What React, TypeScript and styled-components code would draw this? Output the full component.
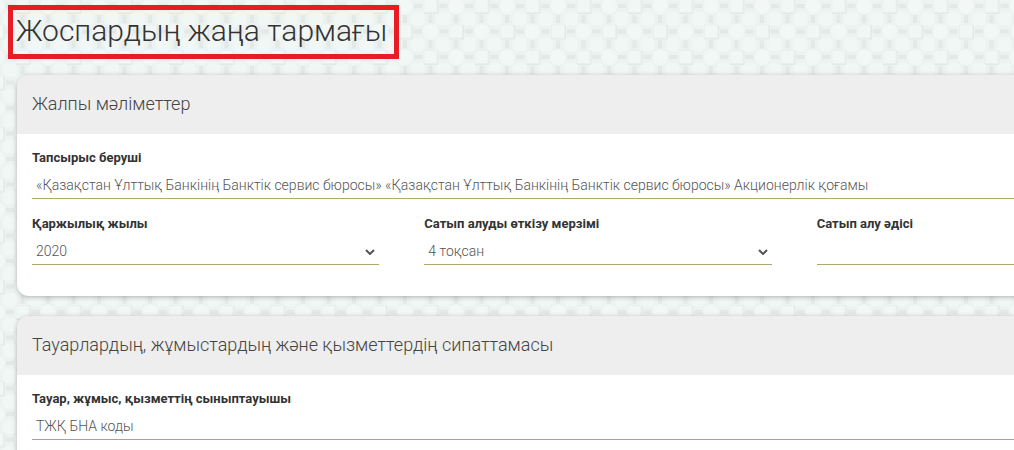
import React, { useId } from "react";
import styled, { createGlobalStyle } from "styled-components";

const GlobalStyle = createGlobalStyle`
  *, *::before, *::after { box-sizing: border-box; }
  html, body { margin: 0; padding: 0; }
  body {
    background: #eff5f3;
    color: #333;
    font-family: Roboto, "Liberation Sans", sans-serif;
    font-size: 14px;
  }
`;

const Page = styled.div`
  position: relative;
  min-height: 100vh;
  overflow: hidden;
`;

const Ornament = styled.svg`
  position: absolute;
  inset: 0;
  width: 100%;
  height: 100%;
`;

const Content = styled.main`
  position: relative;
  display: flex;
  flex-direction: column;
  gap: 16px;
  min-width: 1195px;
  padding: 5px 16px 0 8px;
`;

const PageTitle = styled.h1`
  align-self: flex-start;
  margin: 0;
  padding: 0 7px 2px 3px;
  border: 5px solid #e81c24;
  font-size: 30px;
  font-weight: 300;
  line-height: 42px;
`;

const Cards = styled.div`
  display: flex;
  flex-direction: column;
  gap: 20px;
  padding-left: 9px;
`;

const Card = styled.section`
  overflow: hidden;
  border-radius: 12px;
  background: #fff;
  box-shadow: 0 1px 5px rgba(0, 0, 0, 0.28);
`;

const CardHeader = styled.h2`
  margin: 0;
  padding: 0 15px 2px;
  background: #eee;
  color: #444;
  font-size: 18px;
  font-weight: 300;
  line-height: 57px;
`;

const CardBody = styled.div`
  display: flex;
  flex-direction: column;
  gap: 15px;
  padding: 14px 15px 31px;
`;

const Columns = styled.div`
  display: grid;
  grid-template-columns: repeat(3, 1fr);
  gap: 45px;
`;

const Field = styled.div`
  display: flex;
  flex-direction: column;
`;

const Label = styled.label`
  font-size: 13px;
  font-weight: 700;
  line-height: 20px;
`;

const controlStyles = `
  width: 100%;
  height: 31px;
  margin: 0;
  padding: 0 4px;
  border: 0;
  border-bottom: 1px solid #b0a66f;
  border-radius: 0;
  outline: 0;
  background: transparent;
  color: #555;
  font-family: inherit;
  font-size: 14px;
  font-weight: 300;
`;

const TextInput = styled.input`
  ${controlStyles}
  padding-top: 3px;
  &::placeholder { color: #555; opacity: 1; }
`;

const SelectBox = styled.div`
  display: grid;
  align-items: center;
  & > * { grid-area: 1 / 1; }
`;

const Select = styled.select`
  ${controlStyles}
  padding-top: 3px;
  appearance: none;
`;

const Chevron = styled.svg`
  justify-self: end;
  width: 10px;
  height: 6px;
  margin: 5px 4px 0 0;
  pointer-events: none;
`;

function BackgroundOrnament() {
  return (
    <Ornament aria-hidden="true">
      <defs>
        <g id="node-square">
          <rect x="-7" y="-7" width="14" height="14" fill="#e9efed" />
          <rect x="-6" y="-6" width="12" height="12" fill="#f2f7f6" />
          <path d="M-6.5 7.5H7.5V-6.5" fill="none" stroke="#e2e9e7" />
        </g>
        <g id="node-star">
          <path
            d="M-7 -7L-3 -5L0 -8L3 -5L7 -7L5 -3L8 0L5 3L7 7L3 5L0 8L-3 5L-7 7L-5 3L-8 0L-5 -3Z"
            fill="#f3f8f7"
          />
          <path d="M-8 -5L-5 -8M5 -8L8 -5M8 5L5 8M-5 8L-8 5" stroke="#e8eeec" />
        </g>
        <g id="link">
          <rect x="-5" y="-5" width="10" height="10" fill="#edf2f1" />
          <rect x="-4" y="-2" width="8" height="4" fill="#e2e9e7" />
        </g>
        <rect id="block" x="-6" y="-6" width="12" height="12" fill="#f1f7f5" />
        <pattern id="weave" x="-3" y="6" width="51" height="51" patternUnits="userSpaceOnUse">
          {[0, 1, 2].map((row) =>
            [0, 1, 2].map((col) => {
              const x = col * 25.5;
              const y = row * 25.5;
              return (
                <g key={`${row}-${col}`} transform={`translate(${x} ${y})`}>
                  <use href="#block" x="13" y="13" />
                  <use href="#link" x="13" y="0" />
                  <use href="#link" transform="translate(0 13) rotate(90)" />
                  <use href={(row + col) % 2 ? "#node-square" : "#node-star"} />
                </g>
              );
            })
          )}
        </pattern>
      </defs>
      <rect width="100%" height="100%" fill="url(#weave)" />
    </Ornament>
  );
}

function TextField({ label, ...input }: { label: string } & React.ComponentProps<"input">) {
  const id = useId();
  return (
    <Field>
      <Label htmlFor={id}>{label}</Label>
      <TextInput id={id} type="text" {...input} />
    </Field>
  );
}

function SelectField({ label, options }: { label: string; options: string[] }) {
  const id = useId();
  return (
    <Field>
      <Label htmlFor={id}>{label}</Label>
      <SelectBox>
        <Select id={id} defaultValue={options[0]}>
          {options.map((option) => (
            <option key={option} value={option}>
              {option}
            </option>
          ))}
        </Select>
        <Chevron viewBox="0 0 10 6" aria-hidden="true">
          <path d="M1 1L5 5L9 1" fill="none" stroke="#555" strokeWidth="2" />
        </Chevron>
      </SelectBox>
    </Field>
  );
}

export default function App() {
  return (
    <Page>
      <GlobalStyle />
      <BackgroundOrnament />
      <Content>
        <PageTitle>Жоспардың жаңа тармағы</PageTitle>
        <Cards>
          <Card>
            <CardHeader>Жалпы мәліметтер</CardHeader>
            <CardBody>
              <TextField
                label="Тапсырыс беруші"
                defaultValue="«Қазақстан Ұлттық Банкінің Банктік сервис бюросы» «Қазақстан Ұлттық Банкінің Банктік сервис бюросы» Акционерлік қоғамы"
              />
              <Columns>
                <SelectField label="Қаржылық жылы" options={["2020"]} />
                <SelectField label="Сатып алуды өткізу мерзімі" options={["4 тоқсан"]} />
                <SelectField label="Сатып алу әдісі" options={[""]} />
              </Columns>
            </CardBody>
          </Card>
          <Card>
            <CardHeader>Тауарлардың, жұмыстардың және қызметтердің сипаттамасы</CardHeader>
            <CardBody>
              <TextField label="Тауар, жұмыс, қызметтің сыныптауышы" placeholder="ТЖҚ БНА коды" />
            </CardBody>
          </Card>
        </Cards>
      </Content>
    </Page>
  );
}
